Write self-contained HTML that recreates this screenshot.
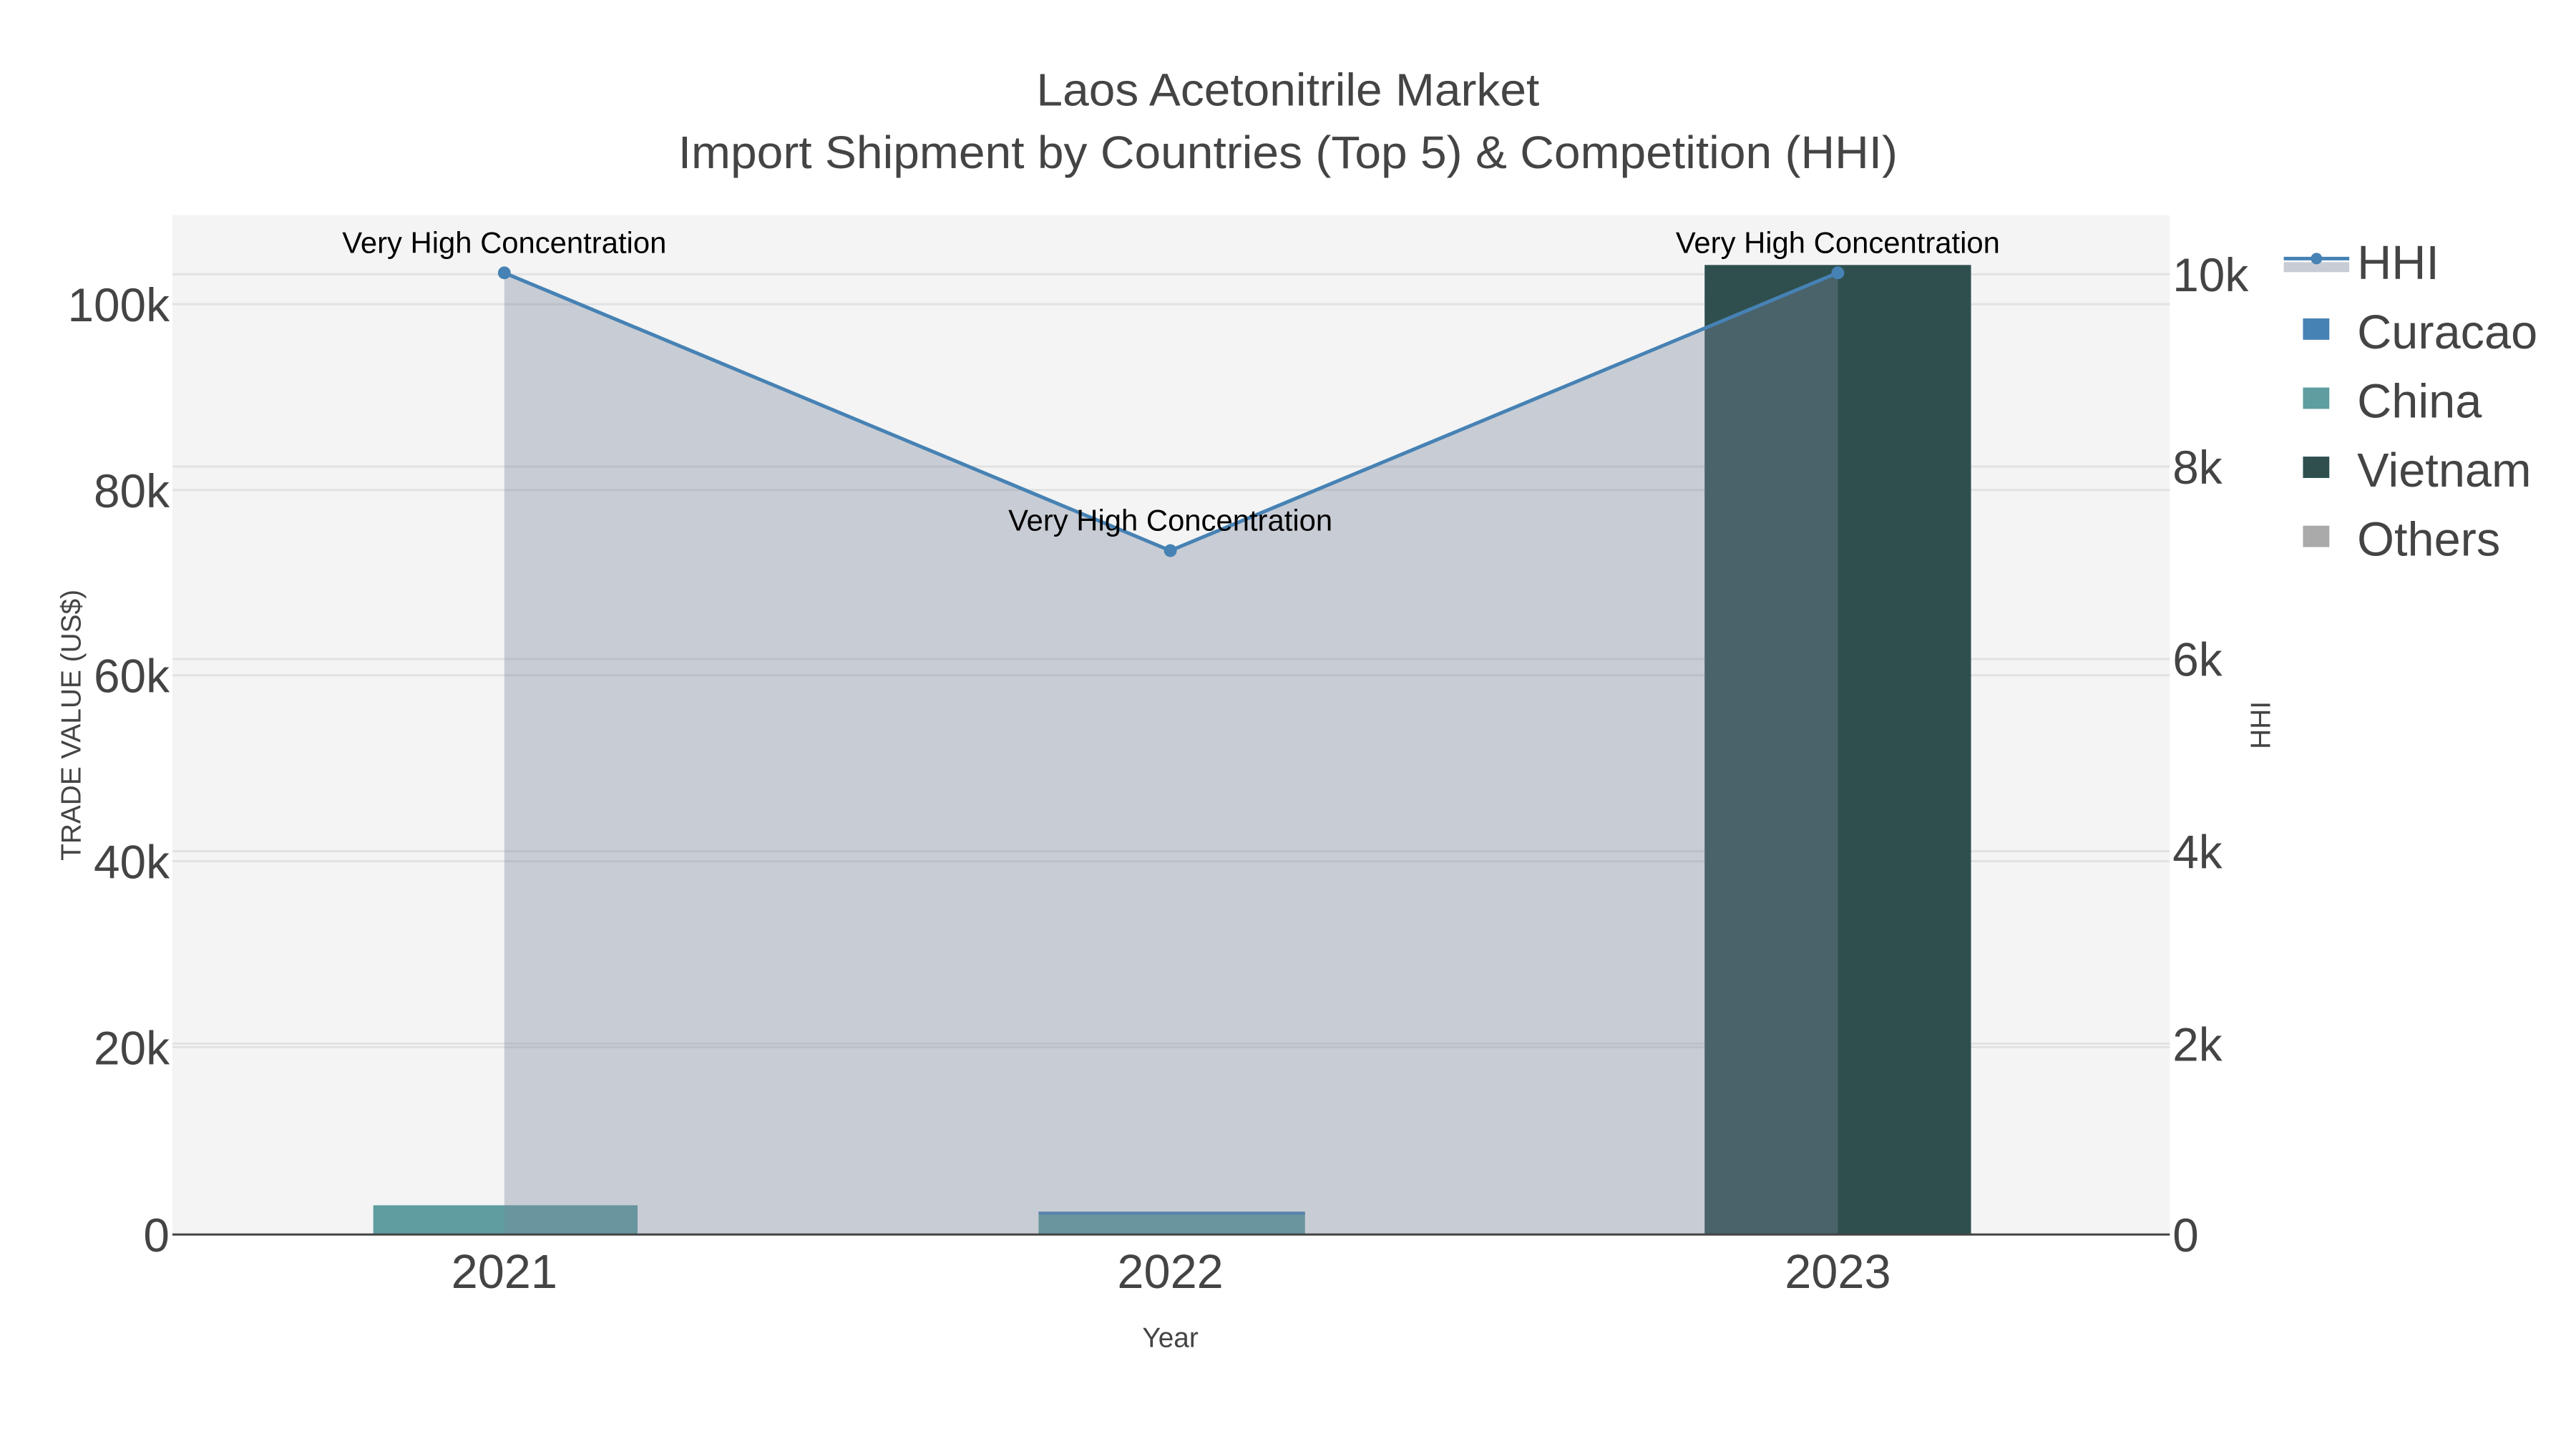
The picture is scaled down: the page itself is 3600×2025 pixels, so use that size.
<!DOCTYPE html>
<html><head><meta charset="utf-8"><style>html,body{margin:0;padding:0;background:#fff}svg{display:block}</style></head>
<body>
<svg width="3600" height="2025" viewBox="0 0 3600 2025" xmlns="http://www.w3.org/2000/svg" font-family="'Liberation Sans', sans-serif">
<rect width="3600" height="2025" fill="#fff"/>
<g transform="scale(0.9955)">
<rect x="242" y="302" width="2804" height="1431" fill="#f4f4f4"/>
<g stroke="#e2e2e2" stroke-width="3">
<line x1="242" x2="3046" y1="427" y2="427"/><line x1="242" x2="3046" y1="688" y2="688"/><line x1="242" x2="3046" y1="948" y2="948"/><line x1="242" x2="3046" y1="1209" y2="1209"/><line x1="242" x2="3046" y1="1470" y2="1470"/>
<line x1="242" x2="3046" y1="385" y2="385"/><line x1="242" x2="3046" y1="655" y2="655"/><line x1="242" x2="3046" y1="925" y2="925"/><line x1="242" x2="3046" y1="1195" y2="1195"/><line x1="242" x2="3046" y1="1465" y2="1465"/>
</g>
<rect x="524" y="1692" width="371" height="41" fill="#5f9ea0"/>
<rect x="1458" y="1701" width="374" height="32" fill="#5f9ea0"/>
<rect x="1458" y="1701" width="374" height="4" fill="#4682b4"/>
<rect x="2393" y="372" width="374" height="1361" fill="#2f4f4f"/>
<polygon points="708,383 1643,773 2580,383 2580,1733 708,1733" fill="rgb(122,133,155)" fill-opacity="0.36"/>
<polyline points="708,383 1643,773 2580,383" fill="none" stroke="#4682b4" stroke-width="5"/>
<circle cx="708" cy="383" r="9" fill="#4682b4"/><circle cx="1643" cy="773" r="9" fill="#4682b4"/><circle cx="2580" cy="383" r="9" fill="#4682b4"/>
<line x1="242" x2="3046" y1="1733" y2="1733" stroke="#444" stroke-width="3"/>
<g font-size="42" fill="#000" text-anchor="middle">
<text x="708" y="355">Very High Concentration</text>
<text x="1643" y="745">Very High Concentration</text>
<text x="2580" y="355">Very High Concentration</text>
</g>
<g font-size="66" fill="#444" text-anchor="end">
<text x="238" y="451">100k</text><text x="238" y="712">80k</text><text x="238" y="972">60k</text><text x="238" y="1233">40k</text><text x="238" y="1494">20k</text><text x="238" y="1757">0</text>
</g>
<g font-size="66" fill="#444" text-anchor="start">
<text x="3050" y="409">10k</text><text x="3050" y="679">8k</text><text x="3050" y="949">6k</text><text x="3050" y="1219">4k</text><text x="3050" y="1489">2k</text><text x="3050" y="1757">0</text>
</g>
<g font-size="67" fill="#444" text-anchor="middle">
<text x="708" y="1808">2021</text><text x="1643" y="1808">2022</text><text x="2580" y="1808">2023</text>
</g>
<text x="1643" y="1891" font-size="39" fill="#444" text-anchor="middle">Year</text>
<text transform="translate(113,1018) rotate(-90)" font-size="39" fill="#444" text-anchor="middle">TRADE VALUE (US$)</text>
<text transform="translate(3187,1018) rotate(-90)" font-size="39" fill="#444" text-anchor="middle">HHI</text>
<g fill="#444" text-anchor="middle" font-size="64">
<text x="1808" y="148" textLength="706" lengthAdjust="spacingAndGlyphs">Laos Acetonitrile Market</text>
<text x="1808" y="236" textLength="1712" lengthAdjust="spacingAndGlyphs">Import Shipment by Countries (Top 5) &amp; Competition (HHI)</text>
</g>
<rect x="3206" y="368" width="92" height="14" fill="#c8ccd4"/>
<line x1="3206" x2="3298" y1="363" y2="363" stroke="#4682b4" stroke-width="5"/>
<circle cx="3252" cy="363" r="8" fill="#4682b4"/>
<rect x="3233" y="447" width="37" height="30" fill="#4682b4"/>
<rect x="3233" y="544" width="37" height="30" fill="#5f9ea0"/>
<rect x="3233" y="641" width="37" height="30" fill="#2f4f4f"/>
<rect x="3233" y="738" width="37" height="30" fill="#aaaaaa"/>
<g font-size="67" fill="#444">
<text x="3309" y="392">HHI</text><text x="3309" y="489">Curacao</text><text x="3309" y="586">China</text><text x="3309" y="683">Vietnam</text><text x="3309" y="780">Others</text>
</g>
</g>
</svg>
</body></html>
